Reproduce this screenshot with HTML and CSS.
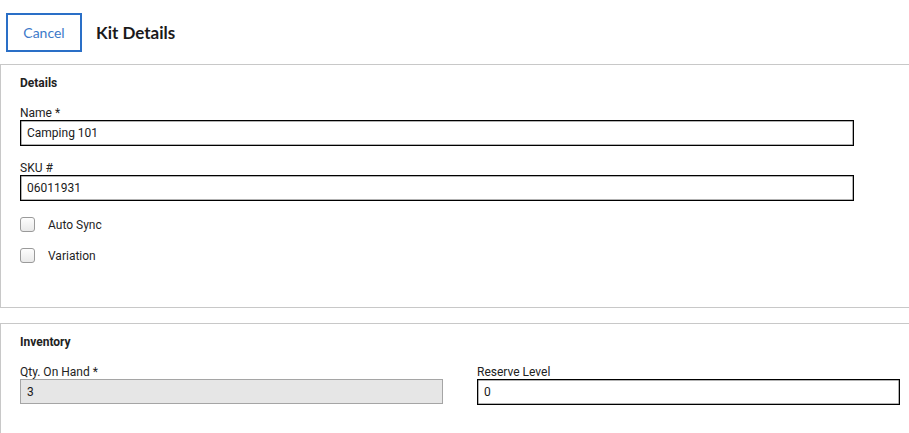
FILE: index.html
```html
<!DOCTYPE html>
<html>
<head>
<meta charset="utf-8">
<link rel="stylesheet" href="styles.css">
</head>
<body>
<div class="header">
  <button class="btn-cancel">Cancel</button>
  <h1 class="title">Kit Details</h1>
</div>
<section class="panel panel-details">
  <h2 class="panel-title">Details</h2>
  <div class="field">
    <label class="label">Name *</label>
    <div class="input">Camping 101</div>
  </div>
  <div class="field">
    <label class="label">SKU #</label>
    <div class="input">06011931</div>
  </div>
  <div class="checks">
    <div class="check"><span class="box"></span><span>Auto Sync</span></div>
    <div class="check"><span class="box"></span><span>Variation</span></div>
  </div>
</section>
<section class="panel panel-inventory">
  <h2 class="panel-title">Inventory</h2>
  <div class="cols">
    <div class="field">
      <label class="label">Qty. On Hand *</label>
      <div class="input input-disabled">3</div>
    </div>
    <div class="field">
      <label class="label">Reserve Level</label>
      <div class="input">0</div>
    </div>
  </div>
</section>
</body>
</html>
```
FILE: styles.css
```css
html, body {
  margin: 0;
  padding: 0;
  background: #fff;
  overflow: hidden;
}
body {
  font-family: Roboto, Lato, "Liberation Sans", sans-serif;
  color: #1f1f1f;
  font-size: 12px;
}
.header {
  display: flex;
  align-items: center;
  gap: 14px;
  padding: 13px 0 12px 6px;
  height: 39px;
  font-family: Lato, Roboto, sans-serif;
}
.btn-cancel {
  width: 76px;
  height: 39px;
  border: 2px solid #2a6fc7;
  background: #fff;
  color: #3c79c9;
  font-family: inherit;
  font-size: 14px;
  padding: 0;
  margin: 0;
}
.title {
  margin: 0;
  font-size: 17px;
  font-weight: 700;
  color: #1a1a1a;
}
.panel {
  border: 1px solid #c8c8c8;
  margin-right: -4px;
  padding: 11px 0 0 19px;
  box-sizing: border-box;
}
.panel-details {
  height: 244px;
}
.panel-inventory {
  margin-top: 15px;
  height: 120px;
  padding-right: 12px;
}
.panel-title {
  margin: 0 0 16px 0;
  font-size: 12px;
  font-weight: 700;
  line-height: 14px;
  color: #222;
}
.field {
  display: flex;
  flex-direction: column;
}
.panel-details .field {
  width: 834px;
  margin-bottom: 15px;
}
.label {
  line-height: 14px;
  font-size: 12px;
  color: #222;
}
.input {
  box-sizing: border-box;
  height: 26px;
  border: 1px solid #000;
  box-shadow: inset 0 0 0 0.5px rgba(0, 0, 0, 0.6);
  padding: 0 6px;
  display: flex;
  align-items: center;
  font-size: 12px;
  color: #1a1a1a;
}
.input-disabled {
  background: #e6e6e6;
  border-color: #a5a5a5;
  box-shadow: none;
  height: 25px;
}
.checks {
  display: flex;
  flex-direction: column;
  gap: 16px;
  padding-top: 1px;
}
.check {
  display: flex;
  align-items: center;
  gap: 13px;
  height: 15px;
}
.box {
  width: 13px;
  height: 13px;
  border: 1px solid #9a9a9a;
  border-radius: 3px;
  background: linear-gradient(#fdfdfd, #e9e9e9);
}
.cols {
  display: grid;
  grid-template-columns: 423px 423px;
  column-gap: 34px;
}
```
